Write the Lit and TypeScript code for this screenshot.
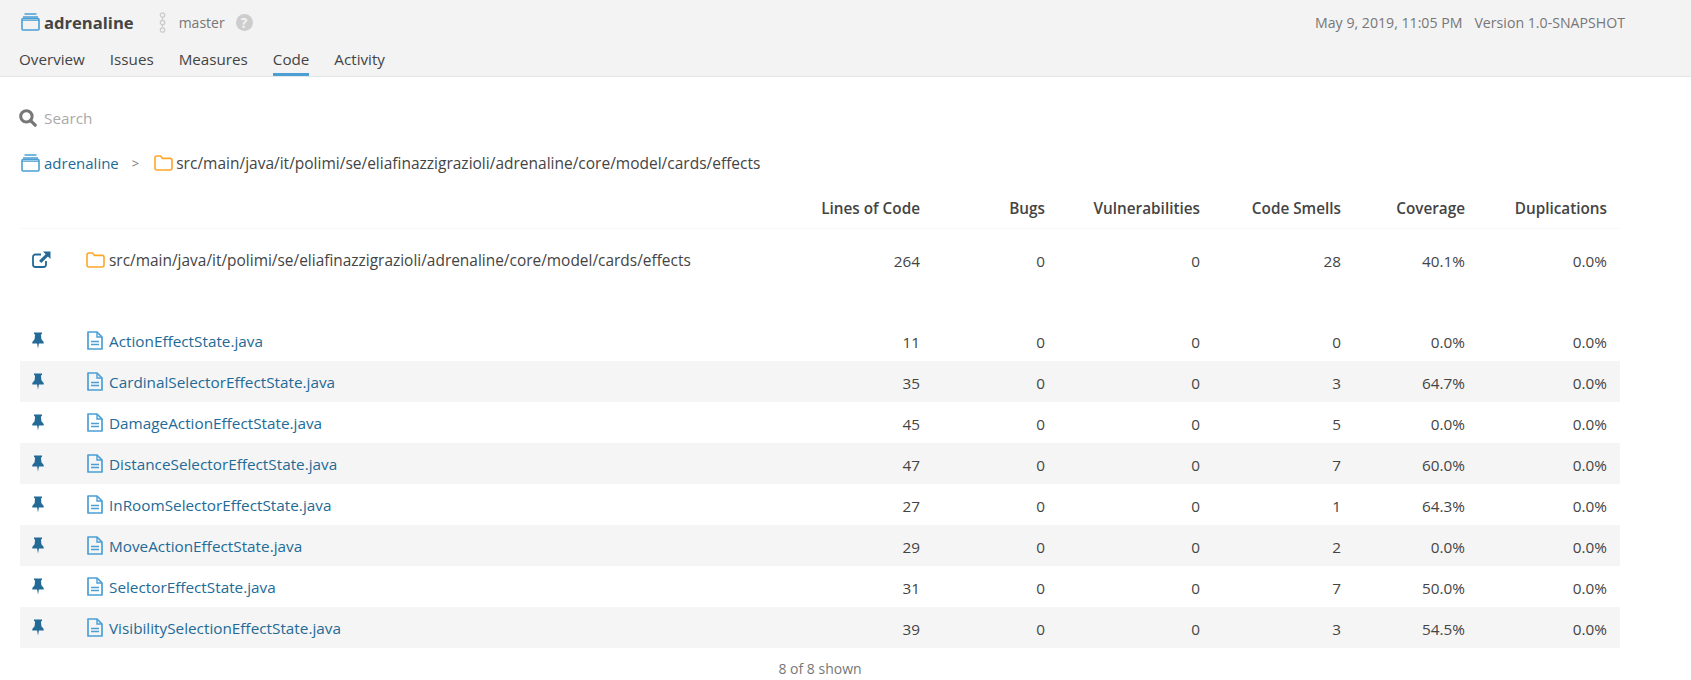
import { LitElement, html, css, svg } from 'lit';
import { customElement } from 'lit/decorators.js';

const projectIcon = html`<svg class="ico" width="19" height="18" viewBox="0 0 19 18">
  <path d="M3.5 1h12M2 4h15" fill="none" stroke="#4b9fd5" stroke-width="1.5"/>
  <rect x="1" y="5.5" width="17" height="11.5" rx="1" fill="none" stroke="#4b9fd5" stroke-width="1.6"/>
  <path d="M1 7.2h17" stroke="#4b9fd5" stroke-width="1.2"/>
</svg>`;

const folderIcon = html`<svg class="ico" width="19" height="16" viewBox="0 0 19 16">
  <path d="M1 3a2 2 0 0 1 2-2h3.5l2 2.4H16a2 2 0 0 1 2 2V13a2 2 0 0 1-2 2H3a2 2 0 0 1-2-2z" fill="none" stroke="#ffa726" stroke-width="1.6" stroke-linejoin="round"/>
</svg>`;

const fileIcon = html`<svg class="ico" width="16" height="19" viewBox="0 0 16 19">
  <path d="M1 1h9l5 5v12H1z" fill="none" stroke="#4b9fd5" stroke-width="1.7" stroke-linejoin="round"/>
  <path d="M10 1v5h5" fill="none" stroke="#4b9fd5" stroke-width="1.4"/>
  <path d="M4 10.5h8M4 13.5h8" stroke="#4b9fd5" stroke-width="1.4"/>
</svg>`;

const pinIcon = html`<svg class="ico" width="12" height="17" viewBox="0 0 12 17">
  <path d="M2 0.5h8v1.8H8.9l.5 5L11.7 10v1.5H6.9L6 16.5l-.9-5H.3V10l2.3-2.7.5-5H2z" fill="#236a97"/>
</svg>`;

const linkIcon = html`<svg class="ico" width="19" height="17" viewBox="0 0 19 17">
  <path d="M14 10v3.5a2.5 2.5 0 0 1-2.5 2.5H3.5A2.5 2.5 0 0 1 1 13.5V6a2.5 2.5 0 0 1 2.5-2.5H9" fill="none" stroke="#236a97" stroke-width="1.8"/>
  <path d="M11 0.5h7.5V8l-2.6-2.6-6.6 6.6-2.2-2.2 6.6-6.6z" fill="#236a97"/>
</svg>`;

const searchIcon = html`<svg class="ico" width="18" height="18" viewBox="0 0 18 18">
  <circle cx="7.4" cy="7.4" r="5.7" fill="none" stroke="#777" stroke-width="3"/>
  <path d="M11.6 11.6l4.6 4.6" stroke="#777" stroke-width="3.2" stroke-linecap="round"/>
</svg>`;

const branchIcon = html`<svg class="ico" width="7" height="21" viewBox="0 0 7 21">
  ${[3, 10.5, 18].map((y) => svg`<circle cx="3.5" cy=${y} r="2.2" fill="none" stroke="#ccc" stroke-width="1.3"/>`)}
  <path d="M3.5 5.2v3M3.5 12.7v3" stroke="#ccc" stroke-width="1.3"/>
</svg>`;

const rows = [
  ['ActionEffectState.java', '11', '0', '0', '0', '0.0%', '0.0%'],
  ['CardinalSelectorEffectState.java', '35', '0', '0', '3', '64.7%', '0.0%'],
  ['DamageActionEffectState.java', '45', '0', '0', '5', '0.0%', '0.0%'],
  ['DistanceSelectorEffectState.java', '47', '0', '0', '7', '60.0%', '0.0%'],
  ['InRoomSelectorEffectState.java', '27', '0', '0', '1', '64.3%', '0.0%'],
  ['MoveActionEffectState.java', '29', '0', '0', '2', '0.0%', '0.0%'],
  ['SelectorEffectState.java', '31', '0', '0', '7', '50.0%', '0.0%'],
  ['VisibilitySelectionEffectState.java', '39', '0', '0', '3', '54.5%', '0.0%'],
];

const path = 'src/main/java/it/polimi/se/eliafinazzigrazioli/adrenaline/core/model/cards/effects';

@customElement('app-root')
export class AppRoot extends LitElement {
  static styles = css`
    :host {
      display: block;
      font-family: 'Open Sans', sans-serif;
      font-size: 15.3px;
      color: #444;
    }
    .ico { display: block; flex-shrink: 0; }

    .nav {
      height: 76px;
      background: #f3f3f3;
      border-bottom: 1px solid #e6e6e6;
      padding: 0 66px 0 21px;
    }
    .nav-top {
      display: flex;
      align-items: center;
      height: 44px;
    }
    .title { margin-left: 4px; font-size: 16.6px; font-weight: 700; color: #444; }
    .branch { margin-left: 25px; }
    .master { margin-left: 13px; font-size: 14px; color: #777; }
    .help {
      margin-left: 11px;
      width: 17px;
      height: 17px;
      border-radius: 50%;
      background: #cdcdcd;
      color: #f3f3f3;
      font-size: 14px;
      font-weight: 700;
      line-height: 17px;
      text-align: center;
    }
    .meta { margin-left: auto; display: flex; gap: 12px; color: #777; font-size: 14.15px; }

    .tabs { display: flex; gap: 25px; margin-left: -2px; }
    .tab {
      height: 32px;
      box-sizing: border-box;
      padding-top: 5px;
      font-size: 15.2px;
      color: #444;
      border-bottom: 3px solid transparent;
    }
    .tab.active { border-bottom-color: #4b9fd5; }

    .content { padding: 31px 20px 0; }
    .search { display: flex; align-items: center; gap: 7px; height: 20px; margin-left: -1px; color: #aaa; }
    .crumbs { display: flex; align-items: center; height: 22px; margin-top: 24px; }
    .crumbs .ico:first-child { margin-left: 1px; }
    .crumb-root { margin-left: 4px; font-size: 15px; color: #236a97; }
    .sep { margin: 0 15px 0 13px; color: #777; font-size: 13px; }
    .crumb-path { margin-left: 3px; font-size: 15.5px; color: #444; }

    .row {
      display: grid;
      grid-template-columns: 66px 654px 180px 125px 155px 141px 124px 142px;
      padding-right: 13px;
      align-items: center;
      height: 41px;
      width: 1600px;
      box-sizing: border-box;
    }
    .row > .num { text-align: right; }
    .summary > .num, .striped > .num { padding-top: 2px; }
    .head {
      margin-top: 16px;
      height: 39px;
      font-weight: 600;
      border-bottom: 1px solid #f8f8f8;
      padding-bottom: 3px;
    }
    .summary { height: 61px; margin-bottom: 30px; }
    .pin { display: flex; justify-content: flex-start; padding-left: 12px; }
    .pin.file { padding-left: 12px; }
    .name { display: flex; align-items: center; gap: 4px; font-size: 15.45px; }
    .name.file { gap: 6px; padding-left: 1px; font-size: 15.3px; }
    .name a { color: #236a97; text-decoration: none; }
    .striped:nth-child(even) { background: #f5f5f5; }
    .footer { width: 1600px; text-align: center; margin-top: 11px; color: #777; font-size: 14px; }
  `;

  render() {
    return html`
      <div class="nav">
        <div class="nav-top">
          ${projectIcon}
          <span class="title">adrenaline</span>
          <span class="branch">${branchIcon}</span>
          <span class="master">master</span>
          <span class="help">?</span>
          <div class="meta"><span>May 9, 2019, 11:05 PM</span><span>Version 1.0-SNAPSHOT</span></div>
        </div>
        <div class="tabs">
          ${['Overview', 'Issues', 'Measures', 'Code', 'Activity'].map(
            (t) => html`<div class="tab ${t === 'Code' ? 'active' : ''}">${t}</div>`
          )}
        </div>
      </div>
      <div class="content">
        <div class="search">${searchIcon}<span>Search</span></div>
        <div class="crumbs">
          ${projectIcon}
          <span class="crumb-root">adrenaline</span>
          <span class="sep">&gt;</span>
          ${folderIcon}
          <span class="crumb-path">${path}</span>
        </div>
        <div class="row head">
          <span></span><span></span>
          <span class="num">Lines of Code</span>
          <span class="num">Bugs</span>
          <span class="num">Vulnerabilities</span>
          <span class="num">Code Smells</span>
          <span class="num">Coverage</span>
          <span class="num">Duplications</span>
        </div>
        <div class="row summary">
          <span class="pin">${linkIcon}</span>
          <span class="name">${folderIcon}<span>${path}</span></span>
          <span class="num">264</span>
          <span class="num">0</span>
          <span class="num">0</span>
          <span class="num">28</span>
          <span class="num">40.1%</span>
          <span class="num">0.0%</span>
        </div>
        <div class="list">
          ${rows.map(
            (r) => html`<div class="row striped">
              <span class="pin file">${pinIcon}</span>
              <span class="name file">${fileIcon}<a>${r[0]}</a></span>
              ${r.slice(1).map((v) => html`<span class="num">${v}</span>`)}
            </div>`
          )}
        </div>
        <div class="footer">8 of 8 shown</div>
      </div>
    `;
  }
}
